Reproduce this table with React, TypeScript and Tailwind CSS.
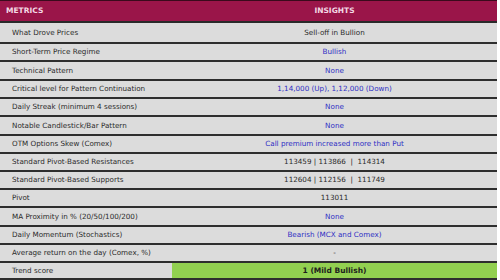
import React from 'react';

type Row = { metric: string; insight: string; blue?: boolean; h: string };

const rows: Row[] = [
  { metric: 'What Drove Prices', insight: 'Sell-off in Bullion', h: 'h-[21px]' },
  { metric: 'Short-Term Price Regime', insight: 'Bullish', blue: true, h: 'h-[18px]' },
  { metric: 'Technical Pattern', insight: 'None', blue: true, h: 'h-[19px]' },
  { metric: 'Critical level for Pattern Continuation', insight: '1,14,000 (Up), 1,12,000 (Down)', blue: true, h: 'h-[18px]' },
  { metric: 'Daily Streak (minimum 4 sessions)', insight: 'None', blue: true, h: 'h-[18px]' },
  { metric: 'Notable Candlestick/Bar Pattern', insight: 'None', blue: true, h: 'h-[19px]' },
  { metric: 'OTM Options Skew (Comex)', insight: 'Call premium increased more than Put', blue: true, h: 'h-[18px]' },
  { metric: 'Standard Pivot-Based Resistances', insight: '113459 | 113866  |  114314', h: 'h-[18px]' },
  { metric: 'Standard Pivot-Based Supports', insight: '112604 | 112156  |  111749', h: 'h-[18px]' },
  { metric: 'Pivot', insight: '113011', h: 'h-[18px]' },
  { metric: 'MA Proximity in % (20/50/100/200)', insight: 'None', blue: true, h: 'h-[19px]' },
  { metric: 'Daily Momentum (Stochastics)', insight: 'Bearish (MCX and Comex)', blue: true, h: 'h-[18px]' },
  { metric: 'Average return on the day (Comex, %)', insight: '-', h: 'h-[18px]' },
];

export default function App() {
  return (
    <div className="w-[500px] h-[280px] bg-white overflow-hidden" style={{ fontFamily: '"DejaVu Sans", Verdana, sans-serif' }}>
      <div className="w-[497px] text-[7.2px] leading-none">
        {/* header */}
        <div className="grid grid-cols-[172px_325px] h-[23px] bg-[#9a1549] border-t border-[#3a0a1c] border-b-2 border-b-[#2a2a2a] text-[#f3d9e4] font-bold text-[7.5px]">
          <div className="flex items-center pl-[6px]">METRICS</div>
          <div className="flex items-center justify-center">INSIGHTS</div>
        </div>

        {rows.map((r) => (
          <div key={r.metric} className={`grid grid-cols-[172px_325px] bg-[#dcdcdc] border-b-2 border-[#2e2e2e] ${r.h}`}>
            <div className="flex items-center pl-[12px] text-[#2b2b2b]">{r.metric}</div>
            <div className={`flex items-center justify-center whitespace-pre ${r.blue ? 'text-[#2f2fc4]' : 'text-[#2b2b2b]'}`}>
              {r.insight}
            </div>
          </div>
        ))}

        <div className="grid grid-cols-[172px_325px] h-[17px] border-b-2 border-[#2e2e2e]">
          <div className="flex items-center pl-[12px] bg-[#dcdcdc] text-[#2b2b2b]">Trend score</div>
          <div className="flex items-center justify-center bg-[#92d050] text-[#1e1e1e] font-bold text-[7.5px]">1 (Mild Bullish)</div>
        </div>
      </div>
    </div>
  );
}
